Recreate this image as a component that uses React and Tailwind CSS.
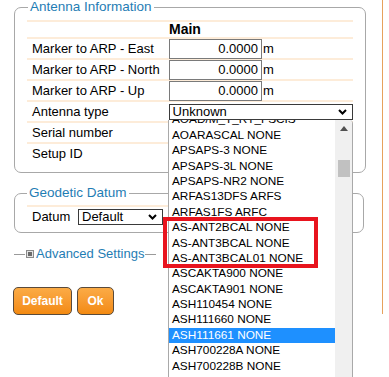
import React from 'react';

const font = { fontFamily: '"Liberation Sans", Arial, sans-serif' };

const items = [
  'AOAD/M_T_RT_FSCIS',
  'AOARASCAL NONE',
  'APSAPS-3 NONE',
  'APSAPS-3L NONE',
  'APSAPS-NR2 NONE',
  'ARFAS13DFS ARFS',
  'ARFAS1FS ARFC',
  'AS-ANT2BCAL NONE',
  'AS-ANT3BCAL NONE',
  'AS-ANT3BCAL01 NONE',
  'ASCAKTA900 NONE',
  'ASCAKTA901 NONE',
  'ASH110454 NONE',
  'ASH111660 NONE',
  'ASH111661 NONE',
  'ASH700228A NONE',
  'ASH700228B NONE',
  'ASH700228C NONE',
];

const Chevron = () => (
  <svg width="9" height="6" viewBox="0 0 9 6" className="shrink-0">
    <polyline points="1,1 4.5,4.5 8,1" fill="none" stroke="#000" strokeWidth="2" />
  </svg>
);

const NumRow = ({ label }) => (
  <div className="flex items-center h-[21px] border-t-2 border-[#fdecd9]">
    <div className="w-[142px] pl-[5px] text-[13px] text-black">{label}</div>
    <div className="w-[93px] h-[20px] border border-[#7a7a7a] text-right pr-[3px] text-[13px] leading-[18px] text-black">0.0000</div>
    <span className="ml-[1px] text-[13px] text-black">m</span>
  </div>
);

const TextRow = ({ label, children }) => (
  <div className="flex items-center h-[21px] border-t-2 border-[#fdecd9]">
    <div className="w-[142px] pl-[5px] text-[13px] text-black">{label}</div>
    {children}
  </div>
);

export default function App() {
  return (
    <div className="bg-white min-h-screen" style={font}>
      <div className="relative w-[383px] h-[314px] border-r border-[#e6a25c] pl-[14px]">
        <fieldset className="w-[350px] border border-[#a8a8a8] rounded-[7px] px-[12px] pb-[9px]">
          <legend className="ml-[1px] px-[2px] text-[13.5px] leading-[14px] text-[#1f7db4]">Antenna Information</legend>
          <div className="pt-[6px] w-[326px]">
            <div className="flex items-center h-[17px] border-t-2 border-[#fdecd9]">
              <div className="w-[142px]" />
              <span className="text-[14px] font-bold text-black leading-[15px]">Main</span>
            </div>
            <NumRow label="Marker to ARP - East" />
            <NumRow label="Marker to ARP - North" />
            <NumRow label="Marker to ARP - Up" />
            <TextRow label="Antenna type">
              <div className="flex items-center justify-between w-[185px] h-[16px] border border-[#3a3a3a] pl-[3px] pr-[5px] text-[13px] leading-[14px] text-black">
                <span>Unknown</span>
                <Chevron />
              </div>
            </TextRow>
            <TextRow label="Serial number" />
            <TextRow label="Setup ID" />
          </div>
        </fieldset>

        <fieldset className="mt-[13px] w-[350px] border border-[#a8a8a8] rounded-[7px] px-[12px] pb-[6px]">
          <legend className="px-[2px] text-[13.5px] leading-[14px] text-[#1f7db4]">Geodetic Datum</legend>
          <div className="pt-[5px]">
            <div className="flex items-center h-[21px] border-t-2 border-[#fdecd9]">
              <span className="pl-[5px] w-[51px] text-[13px] text-black">Datum</span>
              <div className="flex items-center justify-between w-[85px] h-[16px] border border-[#3a3a3a] pl-[3px] pr-[5px] text-[13px] leading-[14px] text-black">
                <span>Default</span>
                <Chevron />
              </div>
            </div>
          </div>
        </fieldset>

        <div className="mt-[13px] flex items-center h-[16px]">
          <div className="w-[11px] h-px bg-[#9a9a9a]" />
          <svg width="8" height="8" viewBox="0 0 8 8" className="ml-[1px]">
            <rect x="0.5" y="0.5" width="7" height="7" fill="#e4e4e4" stroke="#8a8a8a" />
            <rect x="2" y="2" width="4" height="4" fill="#6a6a6a" />
          </svg>
          <span className="ml-[2px] text-[13px] text-[#1f7db4] leading-[16px]">Advanced Settings</span>
          <div className="ml-[1px] w-[11px] h-px bg-[#9a9a9a]" />
        </div>

        <div className="mt-[25px] -ml-[1px] flex gap-[5px]">
          <button className="w-[59px] h-[28px] rounded-[5px] border border-[#5a4a3a] bg-gradient-to-b from-[#fbab45] to-[#f38a0f] text-white font-bold text-[12px]">Default</button>
          <button className="w-[37px] h-[28px] rounded-[5px] border border-[#5a4a3a] bg-gradient-to-b from-[#fbab45] to-[#f38a0f] text-white font-bold text-[12px]">Ok</button>
        </div>

        <div className="absolute left-[168px] top-[120px] w-[185px] h-[257px] flex border-l border-r border-[#a9a9a9] rounded-tr-[4px] bg-white overflow-hidden">
          <div className="flex-1 overflow-hidden">
            <div className="-mt-[7.6px]">
              {items.map((it) => (
                <div
                  key={it}
                  className={`h-[15.4px] leading-[15.4px] pl-[3px] text-[11.8px] whitespace-nowrap ${it === 'ASH111661 NONE' ? 'bg-[#1e90ff] text-white' : 'text-black'}`}
                >
                  {it}
                </div>
              ))}
            </div>
          </div>
          <div className="w-[17px] bg-[#f0f0f0] flex flex-col items-center">
            <svg width="8" height="5" viewBox="0 0 8 5" className="mt-[6px]">
              <polygon points="0,5 4,0 8,5" fill="#505050" />
            </svg>
            <div className="mt-[29px] w-[12px] h-[17px] bg-[#c1c1c1]" />
          </div>
        </div>

        <div className="absolute left-[163px] top-[217px] w-[155px] h-[51px] border-4 border-[#e8141e]" />
      </div>
    </div>
  );
}
